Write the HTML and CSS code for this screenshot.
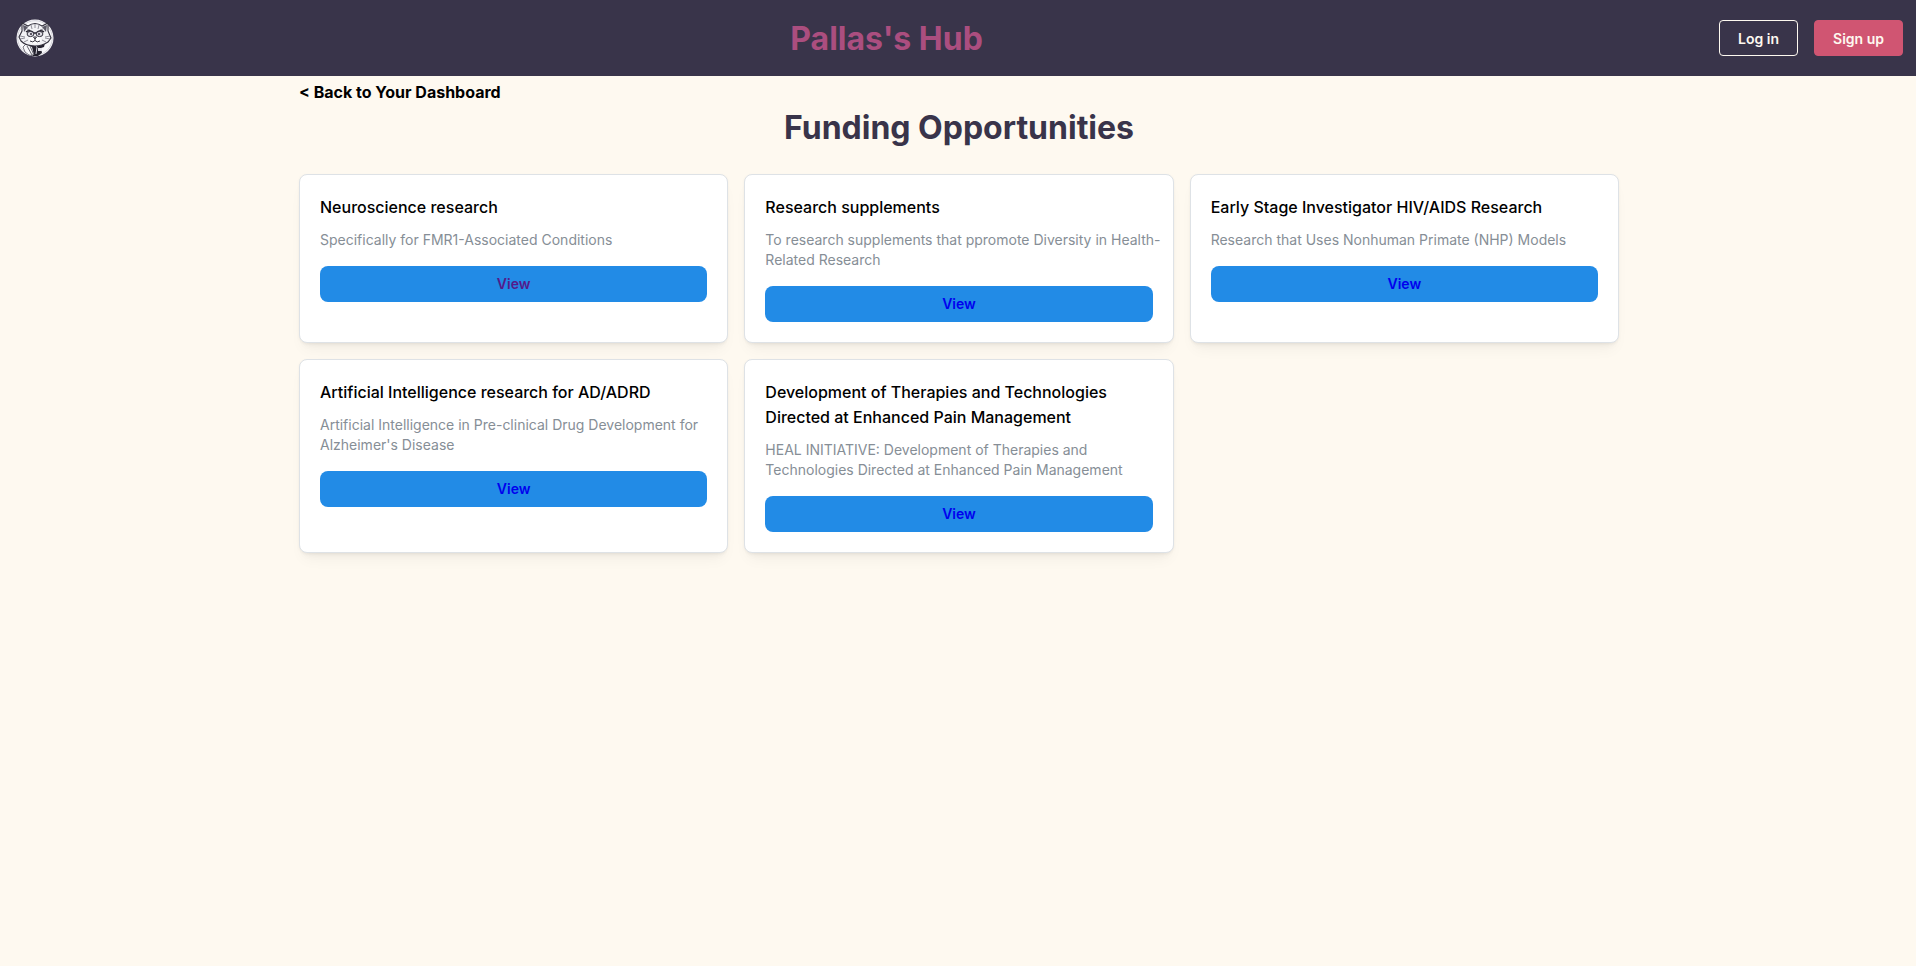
FILE: index.html
```html
<!DOCTYPE html>
<html lang="en">
<head>
<meta charset="utf-8">
<title>Pallas's Hub</title>
<link rel="stylesheet" href="styles.css">
</head>
<body>
<header class="header">
  <a class="logo" href="#" aria-label="Pallas's Hub home">
    <svg viewBox="0 0 38 38" width="38" height="38" aria-hidden="true">
      <circle cx="19" cy="19" r="18.5" fill="#f8f8fa"/>
      <circle cx="19" cy="19" r="17.3" fill="none" stroke="#c9c8d1" stroke-width=".8"/>
      <path d="M7 28 10 25 15 27 18 37 13 36 9 33Z" fill="#f8f8fa" stroke="#55535f" stroke-width=".8"/>
      <path d="M13 25 25 25 29 24 28 28 25 29 26 34 22 37 17 37Z" fill="#24222e"/>
      <path d="M12 26 16 28 18 36 13 34Z" fill="#f8f8fa"/>
      <path d="M11 27l5 9M14 27l4 9" stroke="#55535f" stroke-width=".9" fill="none"/>
      <path d="M19 26l2 2-1 7" stroke="#d8d7df" stroke-width="1" fill="none"/>
      <path d="M6 4 12 7Q19 2 26 7L32 4 32 12 35 19 32 23Q26 27 19 27 10 27 5 22L3 18 6 12Z" fill="#f2f2f5" stroke="#33313d" stroke-width="1.1"/>
      <path d="M7 6l5 2-4 5ZM31 6l-5 2 4 5Z" fill="#5b5966"/>
      <path d="M15 6l1 4M19 5v4M23 6l-1 4M11 10l3 1M27 10l-3 1M4 17l5 1M4 20l5-1M34 17l-5 1M34 20l-5-1M8 23l4-2M30 23l-4-2" stroke="#85838f" stroke-width=".9" fill="none"/>
      <path d="M10 13q4-3 8 1h2q4-4 8-1" stroke="#24222e" stroke-width="1.5" fill="none"/>
      <ellipse cx="14.500" cy="15" rx="3.400" ry="2.600" fill="#dddce3" stroke="#33313d" stroke-width="1"/>
      <ellipse cx="23.500" cy="15" rx="3.400" ry="2.600" fill="#dddce3" stroke="#33313d" stroke-width="1"/>
      <circle cx="15" cy="15" r="1" fill="#33313d"/>
      <circle cx="23" cy="15" r="1" fill="#33313d"/>
      <ellipse cx="19" cy="21" rx="6" ry="3.500" fill="#fff"/>
      <path d="M17.500 18h3L19 20ZM19 20v1.500M14 22q3 2 5-.5 2 2.500 5 .5" stroke="#33313d" stroke-width="1" fill="none"/>
      <path d="M22 29h4v3h-4Z" fill="#e4e3e9"/>
    </svg>
  </a>
  <h1 class="brand">Pallas's Hub</h1>
  <div class="actions">
    <button class="btn btn-outline" type="button">Log in</button>
    <button class="btn btn-filled" type="button">Sign up</button>
  </div>
</header>
<main class="container">
  <a class="back" href="#">&lt; Back to Your Dashboard</a>
  <h1 class="title">Funding Opportunities</h1>
  <div class="grid">
    <article class="card">
      <h2 class="card-title">Neuroscience research</h2>
      <p class="card-text">Specifically for FMR1-Associated Conditions</p>
      <a class="view view-visited" href="#">View</a>
    </article>
    <article class="card">
      <h2 class="card-title">Research supplements</h2>
      <p class="card-text">To research supplements that ppromote Diversity in Health-Related Research</p>
      <a class="view" href="#">View</a>
    </article>
    <article class="card">
      <h2 class="card-title">Early Stage Investigator HIV/AIDS Research</h2>
      <p class="card-text">Research that Uses Nonhuman Primate (NHP) Models</p>
      <a class="view" href="#">View</a>
    </article>
    <article class="card">
      <h2 class="card-title">Artificial Intelligence research for AD/ADRD</h2>
      <p class="card-text">Artificial Intelligence in Pre-clinical Drug Development for Alzheimer's Disease</p>
      <a class="view" href="#">View</a>
    </article>
    <article class="card">
      <h2 class="card-title">Development of Therapies and Technologies Directed at Enhanced Pain Management</h2>
      <p class="card-text">HEAL INITIATIVE: Development of Therapies and Technologies Directed at Enhanced Pain Management</p>
      <a class="view" href="#">View</a>
    </article>
  </div>
</main>
</body>
</html>
```
FILE: styles.css
```css
* { box-sizing: border-box; }

body {
  margin: 0;
  min-height: 100vh;
  background: #fef9f0;
  color: #000;
  font-family: Inter, "Liberation Sans", sans-serif;
  font-size: 16px;
  line-height: 24px;
}

h1, h2, p { margin: 0; }

.header {
  display: flex;
  align-items: center;
  justify-content: space-between;
  height: 76px;
  padding: 0 13px 0 16px;
  background: #39344a;
}

.logo { display: flex; }

.brand, .title {
  font-size: 32px;
  font-weight: 700;
  line-height: 46px;
}

.brand {
  padding-top: 2px;
  color: #ab4e7f;
}

.actions { display: flex; gap: 16px; }

.btn {
  height: 36px;
  padding: 0 18px;
  border: 1px solid #fef9f0;
  border-radius: 4px;
  color: #fef9f0;
  font-family: inherit;
  font-size: 14px;
  font-weight: 600;
}

.btn-outline { background: transparent; }
.btn-filled { background: #d05572; border-color: #d05572; }

.container {
  max-width: 1322px;
  margin: 0 auto;
  padding: 4px 0 32px 2px;
}

.back {
  display: table;
  color: #000;
  font-weight: 700;
  text-decoration: none;
}

.title {
  margin: 1px 0 23px;
  color: #39344a;
  text-align: center;
}

.grid {
  display: grid;
  grid-template-columns: repeat(3, 1fr);
  gap: 16px;
}

.card {
  padding: 20px;
  border: 1px solid #dee2e6;
  border-radius: 8px;
  background: #fff;
  box-shadow: 0 1px 3px rgba(0, 0, 0, 0.05), 0 10px 15px -5px rgba(0, 0, 0, 0.05), 0 7px 7px -5px rgba(0, 0, 0, 0.04);
}

.card-title {
  font-size: 16px;
  font-weight: 500;
  line-height: 25px;
}

.card-text {
  margin: 10px -10px 16px 0;
  color: #868e96;
  font-size: 14px;
  line-height: 20px;
}

.view {
  display: flex;
  align-items: center;
  justify-content: center;
  height: 36px;
  border-radius: 8px;
  background: #228be6;
  color: #0000ee;
  font-size: 14px;
  font-weight: 600;
  text-decoration: none;
}

.view-visited { color: #551a8b; }
```
